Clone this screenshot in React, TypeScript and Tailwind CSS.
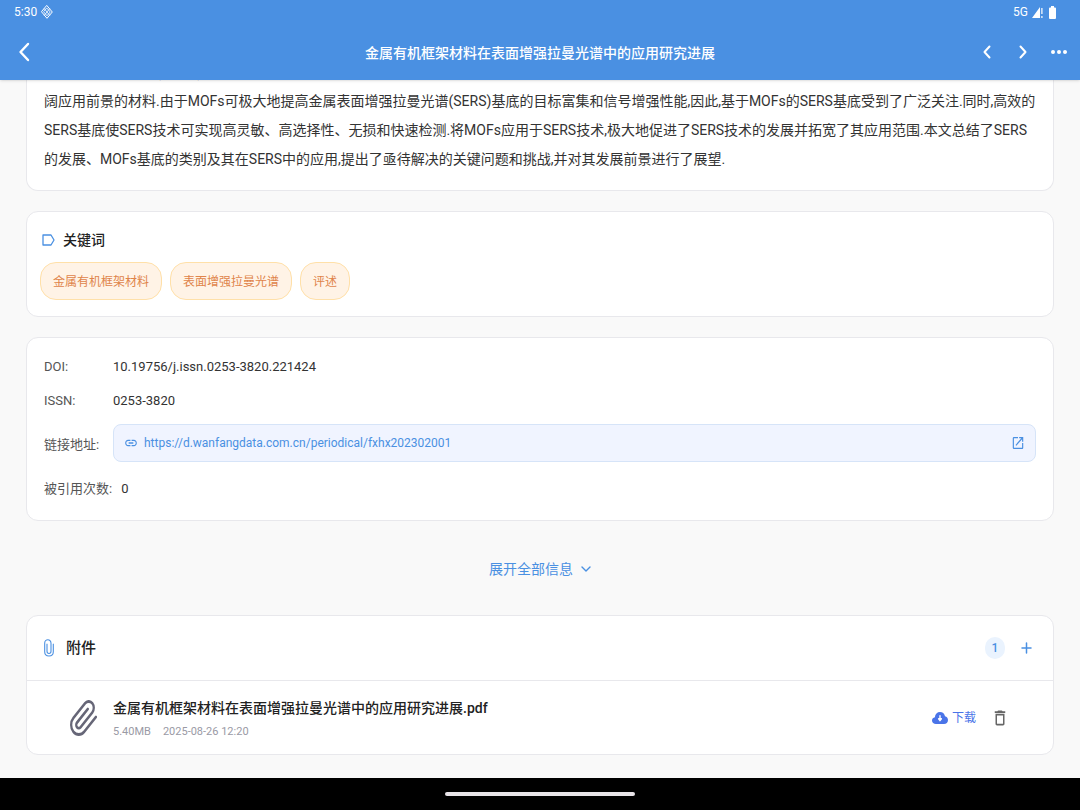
import type { ReactNode } from "react";

const title = "金属有机框架材料在表面增强拉曼光谱中的应用研究进展";
const keywords = ["金属有机框架材料", "表面增强拉曼光谱", "评述"];

interface IconProps {
  className: string;
  viewBox: string;
  children: ReactNode;
}

function Icon({ className, viewBox, children }: IconProps) {
  return (
    <svg
      aria-hidden="true"
      className={`shrink-0 ${className}`}
      viewBox={viewBox}
      preserveAspectRatio="none"
      fill="none"
      stroke="currentColor"
      strokeLinecap="round"
      strokeLinejoin="round"
    >
      {children}
    </svg>
  );
}

function StatusBar() {
  return (
    <div className="flex h-6 items-center justify-between pl-3.5 pr-6 text-xs">
      <div className="flex items-center gap-1">
        <span>5:30</span>
        <Icon className="h-3.5 w-3" viewBox="0 0 12 14">
          <path d="M6 .7 11.3 7 6 13.3.7 7Z" />
          <path d="M6 3.2 9.2 7 6 10.8 2.8 7ZM3.4 3.8l5.2 6.4M8.6 3.8l-5.2 6.4" strokeWidth=".8" />
        </Icon>
      </div>
      <div className="flex items-center gap-1">
        <span>5G</span>
        <Icon className="h-3 w-[11px]" viewBox="0 0 11 12">
          <path d="M8 1V12H0ZM9.300 2h1.200v6H9.300ZM9.300 10h1.200v2H9.300Z" fill="currentColor" stroke="none" />
        </Icon>
        <Icon className="ml-0.5 h-[13px] w-[7px]" viewBox="0 0 7 13">
          <path d="M2 0h3v1.500h1a1 1 0 0 1 1 1V12a1 1 0 0 1-1 1H1a1 1 0 0 1-1-1V2.500a1 1 0 0 1 1-1h1Z" fill="currentColor" stroke="none" />
        </Icon>
      </div>
    </div>
  );
}

function Header() {
  return (
    <header className="relative z-10 bg-[#4a90e2] text-white shadow-sm">
      <StatusBar />
      <div className="flex h-14 items-center">
        <div className="flex-1">
          <button type="button" aria-label="返回" className="flex h-10 w-12 items-center justify-center">
            <Icon className="h-5 w-3" viewBox="0 0 12 20">
              <path d="M10 2 2.500 10l7.500 8" strokeWidth="2.400" />
            </Icon>
          </button>
        </div>
        <h1 className="pt-0.5 text-sm font-medium">{title}</h1>
        <div className="flex-1">
          <div className="flex justify-end pr-[3px]">
            <button type="button" aria-label="上一篇" className="flex h-10 w-9 items-center justify-center">
              <Icon className="h-3.5 w-2" viewBox="0 0 8 14">
                <path d="M6.500 1.500 1.500 7l5 5.500" strokeWidth="2" />
              </Icon>
            </button>
            <button type="button" aria-label="下一篇" className="flex h-10 w-9 items-center justify-center">
              <Icon className="h-3.5 w-2" viewBox="0 0 8 14">
                <path d="m1.500 1.500 5 5.500-5 5.500" strokeWidth="2" />
              </Icon>
            </button>
            <button type="button" aria-label="更多" className="flex h-10 w-9 items-center justify-center">
              <Icon className="h-1 w-4" viewBox="0 0 16 4">
                <path d="M2 2h.01M8 2h.01M14 2h.01" strokeWidth="4" />
              </Icon>
            </button>
          </div>
        </div>
      </div>
    </header>
  );
}

function Abstract() {
  return (
    <section className="overflow-hidden rounded-b-xl border border-t-0 border-[#e8e8ec] bg-white px-[17px] pb-4">
      {/* the first line is scrolled under the header */}
      <p className="-mt-[22px] text-sm leading-[29px] text-[#333]">
        金属有机框架材料(MOFs)是一类由金属离子或金属簇与有机配体通过配位键自组装形成的具有周期性网络结构的多孔晶体材料,是一种在诸多领域中都具有广
        <br />
        阔应用前景的材料.由于MOFs可极大地提高金属表面增强拉曼光谱(SERS)基底的目标富集和信号增强性能,因此,基于MOFs的SERS基底受到了广泛关注.同时,高效的
        <br />
        SERS基底使SERS技术可实现高灵敏、高选择性、无损和快速检测.将MOFs应用于SERS技术,极大地促进了SERS技术的发展并拓宽了其应用范围.本文总结了SERS
        <br />
        的发展、MOFs基底的类别及其在SERS中的应用,提出了亟待解决的关键问题和挑战,并对其发展前景进行了展望.
      </p>
    </section>
  );
}

function Keywords() {
  return (
    <section className="rounded-xl border border-[#e8e8ec] bg-white px-[13px] py-4">
      <div className="flex h-6 items-center gap-2 pl-0.5">
        <Icon className="h-3 w-[13px] text-[#4a90e2]" viewBox="0 0 13 12">
          <path d="M1 1h8L12 6 9 11H1Z" strokeWidth="1.300" />
        </Icon>
        <h2 className="text-sm font-medium text-[#222]">关键词</h2>
      </div>
      <ul className="mt-2.5 flex flex-wrap gap-2">
        {keywords.map((keyword) => (
          <li
            key={keyword}
            className="flex h-[38px] items-center rounded-2xl border border-[#ffe0a8] bg-[#fff3e6] px-3 pt-0.5 text-xs text-[#e0844a]"
          >
            {keyword}
          </li>
        ))}
      </ul>
    </section>
  );
}

function InfoRow({ label, children }: { label: string; children: ReactNode }) {
  return (
    <div className="flex items-center gap-[9px]">
      <dt className="min-w-[60px] shrink-0 text-[#555]">{label}</dt>
      <dd className="min-w-0 flex-1 text-[#333]">{children}</dd>
    </div>
  );
}

function Details() {
  return (
    <section className="rounded-xl border border-[#e8e8ec] bg-white px-[17px] pb-5 pt-[18px]">
      <dl className="flex flex-col gap-3 text-[13px] leading-[22px]">
        <InfoRow label="DOI:">10.19756/j.issn.0253-3820.221424</InfoRow>
        <InfoRow label="ISSN:">0253-3820</InfoRow>
        <InfoRow label="链接地址:">
          <div className="pb-1">
            <a
              href="https://d.wanfangdata.com.cn/periodical/fxhx202302001"
              className="flex h-[38px] items-center gap-1.5 rounded-lg border border-[#d6e4f8] bg-[#f0f4ff] px-2.5 text-xs text-[#4a90e2]"
            >
              <Icon className="h-4 w-3.5" viewBox="0 0 24 24">
                <path
                  d="M3.900 12c0-1.710 1.390-3.100 3.100-3.100h4V7H7c-2.760 0-5 2.240-5 5s2.240 5 5 5h4v-1.900H7c-1.710 0-3.100-1.390-3.100-3.100zM8 13h8v-2H8v2zm9-6h-4v1.900h4c1.710 0 3.100 1.390 3.100 3.100s-1.390 3.100-3.100 3.100h-4V17h4c2.760 0 5-2.240 5-5s-2.240-5-5-5z"
                  fill="currentColor"
                  stroke="none"
                />
              </Icon>
              <span className="min-w-0 flex-1 truncate">https://d.wanfangdata.com.cn/periodical/fxhx202302001</span>
              <Icon className="h-4 w-3.5" viewBox="0 0 24 24">
                <path
                  d="M19 19H5V5h7V3H5a2 2 0 0 0-2 2v14a2 2 0 0 0 2 2h14c1.100 0 2-.9 2-2v-7h-2v7zM14 3v2h3.590l-9.830 9.830 1.410 1.410L19 6.410V10h2V3h-7z"
                  fill="currentColor"
                  stroke="none"
                />
              </Icon>
            </a>
          </div>
        </InfoRow>
        <InfoRow label="被引用次数:">0</InfoRow>
      </dl>
    </section>
  );
}

function Attachments() {
  return (
    <section className="rounded-xl border border-[#e8e8ec] bg-white">
      <div className="flex h-16 items-center justify-between px-[17px]">
        <div className="flex items-center gap-3">
          <Icon className="h-[18px] w-2.5 text-[#4a90e2]" viewBox="0 0 10 20">
            <path d="M9.300 5.500v8.700c0 6.400-8.600 6.400-8.600 0V4.700c0-5 6.300-5 6.300 0v9c0 3.100-4 3.100-4 0V5.500" strokeWidth="1.100" />
          </Icon>
          <h2 className="text-[15px] font-medium text-[#222]">附件</h2>
        </div>
        <div className="flex items-center gap-[11px]">
          <span className="flex h-[22px] w-5 items-center justify-center rounded-full bg-[#eaf3fe] text-xs font-medium text-[#4a90e2]">
            1
          </span>
          <button type="button" aria-label="添加附件" className="flex h-8 w-5 items-center justify-center text-[#4a90e2]">
            <Icon className="h-3 w-[11px]" viewBox="0 0 11 12">
              <path d="M5.500 1v10M1 6h9" strokeWidth="1.500" />
            </Icon>
          </button>
        </div>
      </div>
      <div className="flex h-[74px] items-center border-t border-[#e8e8ec] pl-[43px] pr-[43px]">
        <Icon className="h-9 w-[27px] text-[#667]" viewBox="1.100 .5 21.200 22.400">
          <path
            d="m21.440 11.050-9.190 9.190a6 6 0 0 1-8.490-8.490l9.190-9.190a4 4 0 0 1 5.660 5.660l-9.200 9.190a2 2 0 0 1-2.830-2.830l8.490-8.480"
            strokeWidth="1.800"
          />
        </Icon>
        <div className="ml-4 flex min-w-0 flex-1 flex-col gap-1.5 pt-0.5">
          <p className="truncate text-sm font-medium text-[#222]">{title}.pdf</p>
          <p className="flex gap-3 text-[11px] leading-4 text-[#9a9aa5]">
            <span>5.40MB</span>
            <span>2025-08-26 12:20</span>
          </p>
        </div>
        <button type="button" className="flex h-8 items-center gap-1 text-xs text-[#4a74e8]">
          <Icon className="h-3 w-4" viewBox="0 0 16 12">
            <path
              d="M4 12C1.700 12 0 10.600 0 8.500 0 6.700 1.200 5.500 2.900 5.200 3.100 2 5.200 0 8 0c2.500 0 4.500 1.600 5 4.200 1.800.3 3 1.800 3 3.800 0 2.400-1.700 4-4 4Z"
              fill="currentColor"
              stroke="none"
            />
            <path d="M8 3.800v3M6.600 6.800h2.800L8 8.700Z" stroke="#fff" fill="#fff" strokeWidth="1.400" />
          </Icon>
          下载
        </button>
        <button type="button" aria-label="删除" className="ml-3.5 flex h-8 w-5 items-center justify-center text-[#666]">
          <Icon className="h-5 w-[18px]" viewBox="0 0 24 24">
            <path
              d="M6 19c0 1.100.9 2 2 2h8c1.100 0 2-.9 2-2V7H6v12zM8 9h8v10H8V9zm7.500-5l-1-1h-5l-1 1H5v2h14V4z"
              fill="currentColor"
              stroke="none"
            />
          </Icon>
        </button>
      </div>
    </section>
  );
}

export default function App() {
  return (
    <div className="flex min-h-screen flex-col bg-[#f9f9f9] font-[Roboto,'Noto_Sans_CJK_SC',sans-serif]">
      <Header />
      <main className="flex flex-1 flex-col px-[26px] pb-5">
        <Abstract />
        <div className="mt-5">
          <Keywords />
        </div>
        <div className="mt-5">
          <Details />
        </div>
        <button
          type="button"
          className="mx-auto mb-[26px] mt-7 flex h-10 items-center gap-2 text-sm text-[#4a90e2]"
        >
          展开全部信息
          <Icon className="h-1.5 w-2.5" viewBox="0 0 10 6">
            <path d="m1 1 4 4 4-4" strokeWidth="1.400" />
          </Icon>
        </button>
        <Attachments />
      </main>
      <footer className="flex h-8 items-center justify-center bg-black">
        <div className="h-1 w-[190px] rounded-full bg-[#e8e4e8]" />
      </footer>
    </div>
  );
}
